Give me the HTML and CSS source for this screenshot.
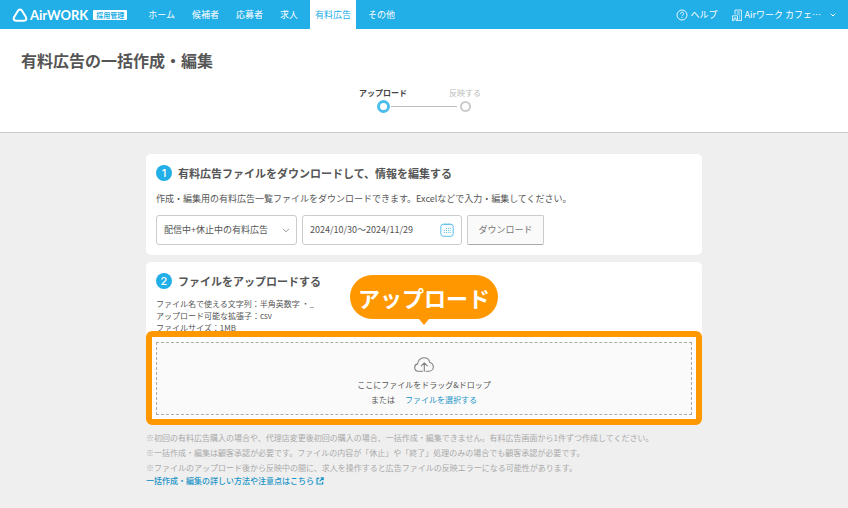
FILE: index.html
```html
<!DOCTYPE html>
<html lang="ja">
<head>
  <meta charset="UTF-8">
  <meta name="viewport" content="width=device-width, initial-scale=1.0">
  <title>有料広告の一括作成・編集</title>
  <link rel="stylesheet" href="styles.css">
</head>
<body>
  <!-- ヘッダー -->
  <header class="header">
    <a class="logo" href="#">
      <svg class="logo-mark" viewBox="0 0 16 14" width="16" height="14" fill="none" stroke="#fff" stroke-width="2" stroke-linejoin="round">
        <path d="M6.300 2.300Q8 .5 9.700 2.300L14 9.300Q15.200 12.500 12 12.700H4Q.8 12.500 2 9.300Z"/>
      </svg>
      <span class="logo-text">AirWORK</span>
      <span class="logo-badge">採用管理</span>
    </a>
    <nav class="nav">
      <a href="#">ホーム</a>
      <a href="#">候補者</a>
      <a href="#">応募者</a>
      <a href="#">求人</a>
      <a class="active" href="#">有料広告</a>
      <a href="#">その他</a>
    </nav>
    <div class="header-right">
      <a class="header-link" href="#">
        <svg viewBox="0 0 12 12" width="12" height="12" fill="none" stroke="#fff" stroke-width=".9">
          <circle cx="6" cy="6" r="5"/>
          <path d="M4.500 4.800C4.500 2.700 7.600 2.700 7.600 4.600C7.600 5.900 6 5.800 6 7.200M6 8.100V9"/>
        </svg>
        ヘルプ
      </a>
      <button class="header-link" type="button">
        <svg viewBox="0 0 10 12" width="10" height="12" fill="none" stroke="#fff" stroke-width=".8">
          <path d="M3 5.500V1H9.400V11.400M.6 11.400V6.800H5.500V11.400M4.800 3H7.800M4.800 5H7.800M7 7H8M7 9H8M2.200 11.400V9H4V11.400M0 11.400H2.200M4 11.400H10"/>
        </svg>
        <span>Airワーク カフェ…</span>
        <svg class="caret" viewBox="0 0 6 4" width="6" height="4" fill="none" stroke="#fff"><path d="M.7.7L3 3L5.300.7"/></svg>
      </button>
    </div>
  </header>

  <!-- タイトルと進捗 -->
  <div class="page-head">
    <h1>有料広告の一括作成・編集</h1>
    <ol class="steps">
      <li class="step current"><span>アップロード</span><i class="dot"></i></li>
      <li class="line"></li>
      <li class="step"><span>反映する</span><i class="dot"></i></li>
    </ol>
  </div>

  <main class="main">
    <!-- 手順1 -->
    <section class="card">
      <h2><span class="num">1</span>有料広告ファイルをダウンロードして、情報を編集する</h2>
      <p class="desc">作成・編集用の有料広告一覧ファイルをダウンロードできます。Excelなどで入力・編集してください。</p>
      <form class="controls">
        <div class="select-wrap">
          <select class="field" aria-label="配信状況">
            <option>配信中+休止中の有料広告</option>
          </select>
          <svg class="select-arrow" viewBox="0 0 8 5" width="8" height="5" fill="none" stroke="#888" stroke-width=".9"><path d="M1 .8L4 3.800L7 .8"/></svg>
        </div>
        <div class="field date">
          <input type="text" aria-label="期間" value="2024/10/30〜2024/11/29">
          <button type="button" aria-label="カレンダー">
            <svg viewBox="0 0 14 14" width="14" height="14" fill="none" stroke="#5bc0eb">
              <rect x=".8" y="1.300" width="12.400" height="12" rx="2.500"/>
              <path stroke-width="1.600" stroke-dasharray="1.200 1" d="M3.500 1.300H10.800"/>
              <path stroke-dasharray="1 1.200" d="M6 5.500H11M3.800 7.500H11M3.800 9.500H11"/>
            </svg>
          </button>
        </div>
        <button class="download" type="button">ダウンロード</button>
      </form>
    </section>

    <!-- 手順2 -->
    <section class="card">
      <h2><span class="num">2</span>ファイルをアップロードする</h2>
      <ul class="rules">
        <li>ファイル名で使える文字列：半角英数字 ・_</li>
        <li>アップロード可能な拡張子：csv</li>
        <li>ファイルサイズ：1MB</li>
      </ul>
      <div class="drop-wrap">
        <div class="drop">
          <svg viewBox="0 0 20 15" width="20" height="15" fill="none" stroke="#808080" stroke-width="1.100" stroke-linecap="round" stroke-linejoin="round">
            <path d="M8.500 14.200H4.500C2.200 14.200.7 12.500.7 10.500C.7 8.600 2 7.200 3.700 6.900C3.500 3.500 6.500.7 9.900.7C13 .7 15.300 2.700 15.800 5.500C17.900 6 19.300 7.800 19.300 9.900C19.300 12.300 17.500 14.200 15 14.200H12.200"/>
            <path d="M10.300 14.200V6M7.300 8.800L10.300 5.800L13.300 8.800"/>
          </svg>
          <p>ここにファイルをドラッグ&amp;ドロップ</p>
          <p class="or">または <a href="#">ファイルを選択する</a></p>
        </div>
        <div class="highlight"></div>
        <div class="callout">アップロード</div>
      </div>
    </section>

    <!-- 注意事項 -->
    <div class="notes">
      <p>※初回の有料広告購入の場合や、代理店変更後初回の購入の場合、一括作成・編集できません。有料広告画面から1件ずつ作成してください。</p>
      <p>※一括作成・編集は顧客承認が必要です。ファイルの内容が「休止」や「終了」処理のみの場合でも顧客承認が必要です。</p>
      <p>※ファイルのアップロード後から反映中の間に、求人を操作すると広告ファイルの反映エラーになる可能性があります。</p>
      <a href="#">一括作成・編集の詳しい方法や注意点はこちら
        <svg viewBox="0 0 8 8" width="8" height="8" fill="none" stroke="#1a94c8" stroke-width="1.200"><path d="M3.300 1.300H1V7H6.700V4.800M4.700.8H7.200V3.300M7 1L3.600 4.400"/></svg>
      </a>
    </div>
  </main>
</body>
</html>
```
FILE: styles.css
```css
* {
  box-sizing: border-box;
}
body {
  margin: 0;
  font-family: "Noto Sans CJK JP", sans-serif;
  font-size: 9px;
  line-height: 14px;
  color: #555;
  background: #efefef;
}
h1, h2, p, ul, ol {
  margin: 0;
  padding: 0;
}
ul, ol {
  list-style: none;
}
a {
  color: #1a94c8;
  text-decoration: none;
}
button, input, select {
  font: inherit;
  color: inherit;
}
svg {
  flex: none;
}

/* ヘッダー */
.header {
  display: flex;
  align-items: center;
  height: 29px;
  padding: 0 12px;
  background: #22aee6;
  color: #fff;
}
.logo {
  display: flex;
  align-items: center;
  color: #fff;
}
.logo-text {
  margin: 0 5px 0 2px;
  font-family: Lato, sans-serif;
  font-size: 13px;
  font-weight: bold;
}
.logo-badge {
  padding: 0 3px;
  border-radius: 1px;
  background: #fff;
  color: #22aee6;
  font-size: 7px;
  font-weight: bold;
  line-height: 10px;
}
.nav {
  display: flex;
  gap: 7px;
  align-self: stretch;
  margin-left: 16px;
}
.nav a {
  padding: 0 5px;
  color: #fff;
  line-height: 29px;
}
.nav .active {
  background: #fff;
  color: #22aee6;
}
.header-right {
  display: flex;
  gap: 14px;
  margin-left: auto;
}
.header-link {
  display: flex;
  align-items: center;
  gap: 3px;
  padding: 0;
  border: none;
  background: none;
  color: #fff;
}
.caret {
  margin-left: 6px;
}

/* タイトルと進捗 */
.page-head {
  padding: 19px 21px 18px;
  border-bottom: 1px solid #ccc;
  background: #fff;
}
h1 {
  font-size: 16px;
  line-height: 24px;
}
.steps {
  display: flex;
  justify-content: center;
  align-items: flex-end;
  margin-top: 15px;
}
.step {
  display: flex;
  flex-direction: column;
  align-items: center;
  width: 16px;
  color: #bbb;
  font-size: 8px;
  line-height: 12px;
  white-space: nowrap;
}
.dot {
  width: 11px;
  height: 11px;
  margin: 2px 0;
  border: 2px solid #ccc;
  border-radius: 50%;
}
.current {
  color: #444;
  font-weight: bold;
}
.current .dot {
  width: 13px;
  height: 13px;
  margin: 1px 0;
  border: 3px solid #4dbdec;
}
.line {
  width: 66px;
  height: 1px;
  margin-bottom: 7px;
  background: #bbb;
}

/* カード */
.main {
  max-width: 576px;
  margin: 0 auto;
  padding: 21px 10px;
}
.card {
  padding: 10px;
  border-radius: 5px;
  background: #fff;
}
.card + .card {
  margin-top: 7px;
}
h2 {
  display: flex;
  align-items: center;
  gap: 6px;
  font-size: 11px;
  line-height: 18px;
}
.num {
  width: 16px;
  border-radius: 50%;
  background: #22aee6;
  color: #fff;
  font-family: Inter, sans-serif;
  font-weight: 500;
  line-height: 16px;
  text-align: center;
}
.desc {
  margin: 10px 0 9px;
}
.controls {
  display: flex;
  gap: 5px;
}
.select-wrap {
  position: relative;
  width: 141px;
}
.field {
  height: 30px;
  border: 1px solid #ccc;
  border-radius: 3px;
  background: #fff;
}
select.field {
  width: 100%;
  padding: 0 20px 0 7px;
  appearance: none;
}
.select-arrow {
  position: absolute;
  top: 13px;
  right: 7px;
  pointer-events: none;
}
.date {
  display: flex;
  align-items: center;
  width: 160px;
  padding: 0 7px;
}
.date input {
  flex: 1;
  min-width: 0;
  padding: 0;
  border: none;
}
.date button {
  display: flex;
  padding: 0;
  border: none;
  background: none;
}
.download {
  width: 77px;
  padding: 0;
  border: 1px solid #ccc;
  border-bottom-color: #aaa;
  border-radius: 2px;
  background: #fafafa;
  color: #777;
}

/* アップロード */
.rules {
  margin: 8px 0;
  font-size: 8px;
  line-height: 12px;
}
.drop-wrap {
  position: relative;
}
.drop {
  display: flex;
  flex-direction: column;
  align-items: center;
  padding: 14px 0 7px;
  border: 1px dashed #aaa;
  background: #fafafa;
  font-size: 8px;
  line-height: 15px;
}
.drop svg {
  margin-bottom: 5px;
}
.or a {
  margin-left: 8px;
}
.highlight {
  position: absolute;
  inset: -11px -10px -10px;
  border: 6px solid #ff9800;
  border-radius: 6px;
  pointer-events: none;
}
.callout {
  position: absolute;
  bottom: calc(100% + 23px);
  left: 50%;
  padding: 0 8px;
  border-radius: 22px;
  background: #ff9800;
  color: #fff;
  font-size: 22px;
  font-weight: bold;
  line-height: 44px;
  white-space: nowrap;
  transform: translateX(-50%);
}
.callout::after {
  content: "";
  position: absolute;
  top: 100%;
  left: 50%;
  border: 5px solid transparent;
  border-top: 6px solid #ff9800;
  border-bottom: none;
  transform: translateX(-50%);
}

/* 注意事項 */
.notes {
  margin-top: 5px;
  color: #aaa;
  font-size: 8px;
  line-height: 15px;
}
.notes a {
  display: flex;
  align-items: center;
  gap: 2px;
  line-height: 12px;
  font-weight: 500;
}
```
